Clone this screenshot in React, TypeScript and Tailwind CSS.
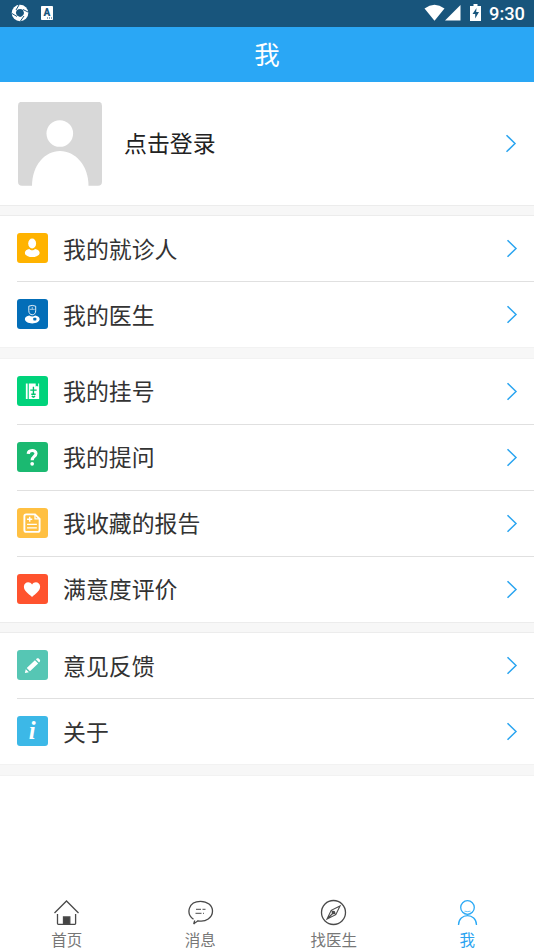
import type { ReactNode } from "react";

type Item = {
  label: string;
  color: string;
  icon: ReactNode;
};

const visitItems: Item[] = [
  {
    label: "我的就诊人",
    color: "bg-[#ffb300]",
    icon: (
      <g fill="#fff">
        <ellipse cx="15.400" cy="10.700" rx="4" ry="5" />
        <path d="M8 20c0-2 2-3.200 4.500-3.800 1.300 1.900 4.500 1.900 5.800 0C21 16.800 23 18 23 20c0 2.800-3.500 4.500-7.500 4.500S8 22.800 8 20z" />
      </g>
    ),
  },
  {
    label: "我的医生",
    color: "bg-[#036eb8]",
    icon: (
      <g>
        <path d="M12 7.300q3.500-1.600 7 0v4.700c0 2.500-1.500 4-3.500 4s-3.500-1.500-3.500-4z" fill="none" stroke="#fff" strokeWidth="0.900" />
        <path d="M13 10.500h5M15.500 8v2.500" stroke="#fff" strokeWidth="0.800" opacity="0.800" />
        <path d="M8 20.300c0-2 2-3 4.500-3.500 1.500 1.200 4.500 1.200 6 0 2.500.5 4.500 1.500 4.500 3.500 0 2.700-3.500 4.500-7.500 4.500S8 23 8 20.300z" fill="#fff" />
        <rect x="16.500" y="19" width="3.200" height="2.800" rx="0.800" fill="#036eb8" />
      </g>
    ),
  },
];

const recordItems: Item[] = [
  {
    label: "我的挂号",
    color: "bg-[#00d37b]",
    icon: (
      <g>
        <path d="M9 7.500h1.800v16H9zM12 7.500h7v3.300l1.200-1 1.300 1V7.500h1v16H12z" fill="#fff" />
        <path d="M16.700 11v7M13.500 14.300h6.500M14.500 18.500h4.500M15 20.500l1.700 1 1.700-1" fill="none" stroke="#00c26e" strokeWidth="1.400" />
      </g>
    ),
  },
  {
    label: "我的提问",
    color: "bg-[#1bb971]",
    icon: (
      <g>
        <path d="M11.400 12c.2-4.300 7.900-4.600 7.900-.3 0 2.900-3.900 3-3.900 6.800" fill="none" stroke="#fff" strokeWidth="3.200" />
        <circle cx="15.400" cy="22.200" r="1.900" fill="#fff" />
      </g>
    ),
  },
  {
    label: "我收藏的报告",
    color: "bg-[#ffc042]",
    icon: (
      <g fill="none" stroke="#fff">
        <path d="M9.300 6.500h9L23 11v11.300q0 2-2 2H9.500q-2 0-2-2v-14q0-1.800 1.800-1.800z" strokeWidth="1.900" />
        <path d="M18.300 6.500V11H23" strokeWidth="1.300" />
        <path d="M10.200 11.500h5.300M12.900 8.900v5.200" strokeWidth="1.500" />
        <path d="M10.200 16.700h10M10.200 20.300h10" strokeWidth="1.300" />
      </g>
    ),
  },
  {
    label: "满意度评价",
    color: "bg-[#ff532e]",
    icon: (
      <path d="M15.300 23.300C12 20.300 7 17 7 12.900c0-4.900 6-6 8.300-2.300 2.300-3.700 8.200-2.600 8.200 2.300 0 4.100-4.900 7.400-8.200 10.400z" fill="#fff" />
    ),
  },
];

const otherItems: Item[] = [
  {
    label: "意见反馈",
    color: "bg-[#56c6b4]",
    icon: (
      <g fill="#fff">
        <path d="M8 23.500l.9-4 3.200 3.100zM9.900 18.400l8.300-8 3.300 3.300-8.300 8zM19.200 9.500l1-.9c1.400-1.200 4.200 1.600 3.100 3l-.9 1z" />
      </g>
    ),
  },
  {
    label: "关于",
    color: "bg-[#3cb8e7]",
    icon: (
      <text x="15.300" y="23.800" textAnchor="middle" fontFamily="Liberation Serif, serif" fontStyle="italic" fontWeight="700" fontSize="25" fill="#fff">i</text>
    ),
  },
];

function Chevron() {
  return (
    <svg className="h-5 w-3 shrink-0" viewBox="0 0 12 20" fill="none" stroke="#2ba5f0" strokeWidth="1.500">
      <path d="M1.500 1.200L10 9.500l-8.500 8.300" />
    </svg>
  );
}

function Row({ item, last, textClass }: { item: Item; last: boolean; textClass: string }) {
  return (
    <div className="pl-[17px]">
      <div className={last ? "flex h-[65px] items-center pr-4" : "flex h-[66px] items-center border-b border-[#e0e0e0] pr-4"}>
        <svg className={`mb-px h-[30.500px] w-[30.500px] shrink-0 rounded-[3px] ${item.color}`} viewBox="0 0 31 31">
          {item.icon}
        </svg>
        <span className={`ml-[15.500px] flex-1 text-[22.900px] leading-8 text-[#333] ${textClass}`}>{item.label}</span>
        <Chevron />
      </div>
    </div>
  );
}

function Group({ items, textClass = "pb-px" }: { items: Item[]; textClass?: string }) {
  return (
    <section className="bg-white">
      {items.map((item, i) => (
        <Row key={item.label} item={item} last={i === items.length - 1} textClass={textClass} />
      ))}
    </section>
  );
}

function StatusBar() {
  return (
    <div className="flex h-[27px] items-center bg-[#18557c] text-white">
      <svg className="mb-px ml-[11px] h-[18px] w-[18px]" viewBox="0 0 18 18">
        <circle cx="9" cy="9" r="8.300" fill="#fff" />
        <path d="M5.500 6.500Q9 4 12 6L13 9q-.5 3-4 4L6 11.500Q4 9 5.500 6.500z" fill="#18557c" />
        <path d="M5 6L8 1M12 5.500l5 2.500M13 12L9.500 17M6 12.500L1 9.500" stroke="#18557c" strokeWidth="1" />
      </svg>
      <svg className="mb-px ml-3 h-[14px] w-3" viewBox="0 0 12 14">
        <rect width="12" height="14" rx="0.800" fill="#fff" />
        <text x="6" y="10" textAnchor="middle" fontFamily="Roboto, sans-serif" fontWeight="900" fontSize="10" fill="#18557c">A</text>
        <path d="M6 12h1M8 12h1M10 12h1" stroke="#18557c" />
      </svg>
      <div className="ml-auto flex items-center pr-[9px]">
        <svg className="mb-px h-[17px] w-[21px]" viewBox="0 0 21 17" fill="#fff">
          <path d="M.5 4.500Q10.500-2.800 20.500 4.500L10.500 16.700z" />
        </svg>
        <svg className="mb-px h-[17px] w-4" viewBox="0 0 16 17" fill="#fff">
          <path d="M15.500 1v15.500H0z" />
        </svg>
        <svg className="mb-px ml-[9px] h-[17px] w-[11px]" viewBox="0 0 11 17">
          <path d="M3.500 0h4v2H11v15H0V2h3.500z" fill="#fff" />
          <path d="M6.500 4L2.500 10h2.700v4.500L9 8H6.200z" fill="#18557c" />
        </svg>
        <span className="ml-[8px] w-9 pt-px font-[Roboto] text-[18.300px] leading-none font-medium">9:30</span>
      </div>
    </div>
  );
}

const tabs = [
  {
    label: "首页",
    icon: (
      <g>
        <path d="M1.500 14L13.500 2l12 12M4.500 15v9.500q0 .8.800.8h16.500q.8 0 .8-.8V15" />
        <path d="M10.500 18h6.300v7h-6.300z" fill="#444" />
      </g>
    ),
  },
  {
    label: "消息",
    icon: (
      <g>
        <path d="M6.500 20.300C-1.500 14.500 1.500 2.300 13.500 2.300c6.800 0 12 4.200 12 9.800 0 6.500-6.500 11.300-14.500 9.700-1.500 1-3 1.800-4.300 3.200l1-3.500" />
        <path d="M9 10.300h5M15.500 10.300h3M8.500 14.300h6M16 14.300h1" strokeWidth="1" />
      </g>
    ),
  },
  {
    label: "找医生",
    icon: (
      <g>
        <circle cx="13.500" cy="13.500" r="12" />
        <path d="M20 7l-4.200 8.700L7 20l4.200-8.700zM11.200 11.300l4.600 4.400M8 19l4.700-4.500" strokeWidth="1.100" />
        <circle cx="13.500" cy="13.500" r="1.200" />
      </g>
    ),
  },
  {
    label: "我",
    icon: (
      <g>
        <circle cx="13.500" cy="8.500" r="6.800" />
        <path d="M4.500 26c0-12.500 18-12.500 18 0" />
        <path d="M10.500 12.200q3 .8 6 0" strokeWidth="0.700" />
      </g>
    ),
  },
];

function TabBar() {
  return (
    <nav className="mt-auto grid h-[51px] grid-cols-4 bg-white">
      {tabs.map((tab) => {
        const active = tab.label === "我";
        return (
          <div key={tab.label} className="flex flex-col items-center">
            <svg className="h-[27px] w-[27px]" viewBox="0 0 27 27" fill="none" stroke={active ? "#2ba9f5" : "#4a4a4a"} strokeWidth="1.300">
              {tab.icon}
            </svg>
            <span className={active ? "mt-[3px] text-[15.500px] leading-5 text-[#2ba3f0]" : "mt-[3px] text-[15.500px] leading-5 text-[#777]"}>
              {tab.label}
            </span>
          </div>
        );
      })}
    </nav>
  );
}

export default function App() {
  return (
    <main className="flex h-[950px] w-[534px] flex-col overflow-hidden bg-white font-['Noto_Sans_CJK_SC',sans-serif]">
      <StatusBar />
      <header className="flex h-[55px] items-center justify-center bg-[#2aa7f5] pb-[2px] text-[25.500px] text-white">
        <h1 className="font-normal">我</h1>
      </header>

      <section className="flex h-[123px] items-center pr-[17px] pl-[18px]">
        <svg className="h-[84px] w-[84px]" viewBox="0 0 84 84">
          <rect y="-0.300" width="84" height="84" rx="4" fill="#d8d8d8" />
          <circle cx="41.800" cy="31.500" r="13.300" fill="#fff" />
          <path d="M14 84C14 63 27 49 42 49s28.500 14 28.500 35z" fill="#fff" />
        </svg>
        <span className="ml-[22px] flex-1 pb-[2px] text-[22.900px] text-[#222]">点击登录</span>
        <Chevron />
      </section>

      <div className="h-[11px] border-y border-[#ececec] bg-[#f7f7f7]" />
      <Group items={visitItems} />
      <div className="h-3 border-y border-[#f2f2f2] bg-[#f7f7f7]" />
      <Group items={recordItems} textClass="pb-[3px]" />
      <div className="h-[11px] border-y border-[#ececec] bg-[#f7f7f7]" />
      <Group items={otherItems} />
      <div className="h-3 border-y border-[#f2f2f2] bg-[#f7f7f7]" />

      <TabBar />
    </main>
  );
}
